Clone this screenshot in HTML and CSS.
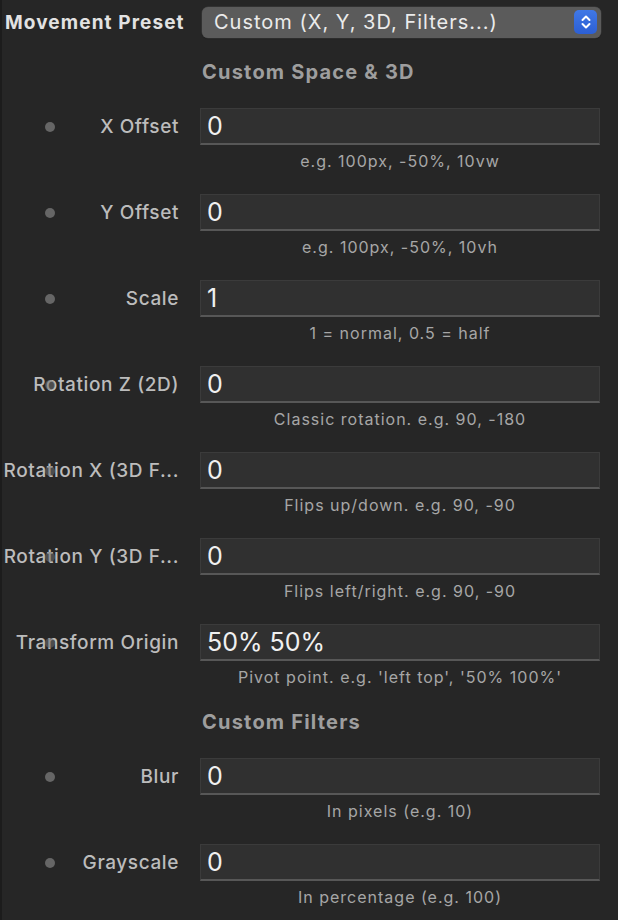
FILE: index.html
```html
<!DOCTYPE html>
<html>
<head>
<meta charset="utf-8">
<link rel="stylesheet" href="styles.css">
</head>
<body>
<div class="panel">
  <div class="preset-row">
    <div class="preset-label">Movement Preset</div>
    <div class="select">
      <span class="select-text">Custom (X, Y, 3D, Filters...)</span>
      <span class="stepper">
        <svg width="12" height="16" viewBox="0 0 12 16"><path d="M2.5 6 L6 2.5 L9.5 6" fill="none" stroke="#fff" stroke-width="2" stroke-linecap="round" stroke-linejoin="round"/><path d="M2.5 10 L6 13.5 L9.5 10" fill="none" stroke="#fff" stroke-width="2" stroke-linecap="round" stroke-linejoin="round"/></svg>
      </span>
    </div>
  </div>

  <div class="section">Custom Space &amp; 3D</div>

  <div class="field">
    <span class="dot"></span>
    <div class="label">X Offset</div>
    <div class="input">0</div>
    <div class="hint">e.g. 100px, -50%, 10vw</div>
  </div>
  <div class="field">
    <span class="dot"></span>
    <div class="label">Y Offset</div>
    <div class="input">0</div>
    <div class="hint">e.g. 100px, -50%, 10vh</div>
  </div>
  <div class="field">
    <span class="dot"></span>
    <div class="label">Scale</div>
    <div class="input">1</div>
    <div class="hint">1 = normal, 0.5 = half</div>
  </div>
  <div class="field">
    <span class="dot dim"></span>
    <div class="label">Rotation Z (2D)</div>
    <div class="input">0</div>
    <div class="hint">Classic rotation. e.g. 90, -180</div>
  </div>
  <div class="field">
    <span class="dot dim"></span>
    <div class="label">Rotation X (3D F...</div>
    <div class="input">0</div>
    <div class="hint">Flips up/down. e.g. 90, -90</div>
  </div>
  <div class="field">
    <span class="dot dim"></span>
    <div class="label">Rotation Y (3D F...</div>
    <div class="input">0</div>
    <div class="hint">Flips left/right. e.g. 90, -90</div>
  </div>
  <div class="field">
    <span class="dot dim"></span>
    <div class="label">Transform Origin</div>
    <div class="input">50% 50%</div>
    <div class="hint">Pivot point. e.g. 'left top', '50% 100%'</div>
  </div>

  <div class="section">Custom Filters</div>

  <div class="field">
    <span class="dot"></span>
    <div class="label">Blur</div>
    <div class="input">0</div>
    <div class="hint">In pixels (e.g. 10)</div>
  </div>
  <div class="field">
    <span class="dot"></span>
    <div class="label">Grayscale</div>
    <div class="input">0</div>
    <div class="hint">In percentage (e.g. 100)</div>
  </div>
</div>
</body>
</html>
```

FILE: styles.css
```css
html, body {
  margin: 0;
  padding: 0;
  background: #262626;
}
body {
  font-family: Inter, "Open Sans", "Liberation Sans", sans-serif;
  height: 920px;
  overflow: hidden;
}
.panel {
  border-left: 2px solid #1c1c1c;
  min-height: 920px;
  box-sizing: border-box;
  padding-top: 6px;
}
.preset-row {
  display: flex;
  align-items: center;
  height: 32px;
}
.preset-label {
  width: 197px;
  padding-left: 3px;
  font-size: 19px;
  font-weight: 700;
  color: #e2e2e2;
  letter-spacing: 1.1px;
  white-space: nowrap;
}
.select {
  width: 399px;
  height: 31px;
  box-sizing: border-box;
  background: #5b5b5b;
  border-radius: 6px;
  box-shadow: 0 0 0 0.5px #3e3e3e, 0 1px 1px rgba(0,0,0,0.3);
  display: flex;
  align-items: center;
  padding-left: 12px;
  padding-right: 4px;
}
.select-text {
  flex: 1;
  font-size: 20px;
  letter-spacing: 1px;
  color: #ebebeb;
  white-space: nowrap;
}
.stepper {
  width: 23px;
  height: 24px;
  border-radius: 5px;
  background: linear-gradient(#4078e6, #2c5fd4);
  display: flex;
  align-items: center;
  justify-content: center;
}
.stepper svg { display: block; }
.section {
  margin-left: 200px;
  margin-top: 22px;
  height: 24px;
  line-height: 24px;
  margin-bottom: 24px;
  font-size: 20px;
  font-weight: 700;
  letter-spacing: 1.2px;
  color: #9e9e9e;
  white-space: nowrap;
}
.field {
  position: relative;
  display: grid;
  grid-template-columns: 198px 400px;
  grid-template-rows: 37px 20px;
  row-gap: 6px;
  margin-bottom: 23px;
}
.dot {
  position: absolute;
  left: 43px;
  top: 14px;
  width: 10px;
  height: 10px;
  border-radius: 50%;
  background: #666666;
}
.dot.dim {
  background: rgba(110,110,110,0.55);
}
.label {
  align-self: center;
  text-align: right;
  padding-right: 21px;
  font-size: 19px;
  font-weight: 500;
  letter-spacing: 0.6px;
  color: #bcbcbc;
  white-space: nowrap;
  overflow: hidden;
}
.input {
  box-sizing: border-box;
  height: 37px;
  background: #303030;
  border: 1px solid #3b3b3b;
  border-bottom: 2px solid #575757;
  padding-left: 6px;
  font-size: 25px;
  line-height: 34px;
  color: #f0f0f0;
}
.hint {
  grid-column: 2;
  text-align: center;
  font-size: 16px;
  letter-spacing: 1px;
  line-height: 20px;
  color: #a6a6a6;
  white-space: nowrap;
}
```
